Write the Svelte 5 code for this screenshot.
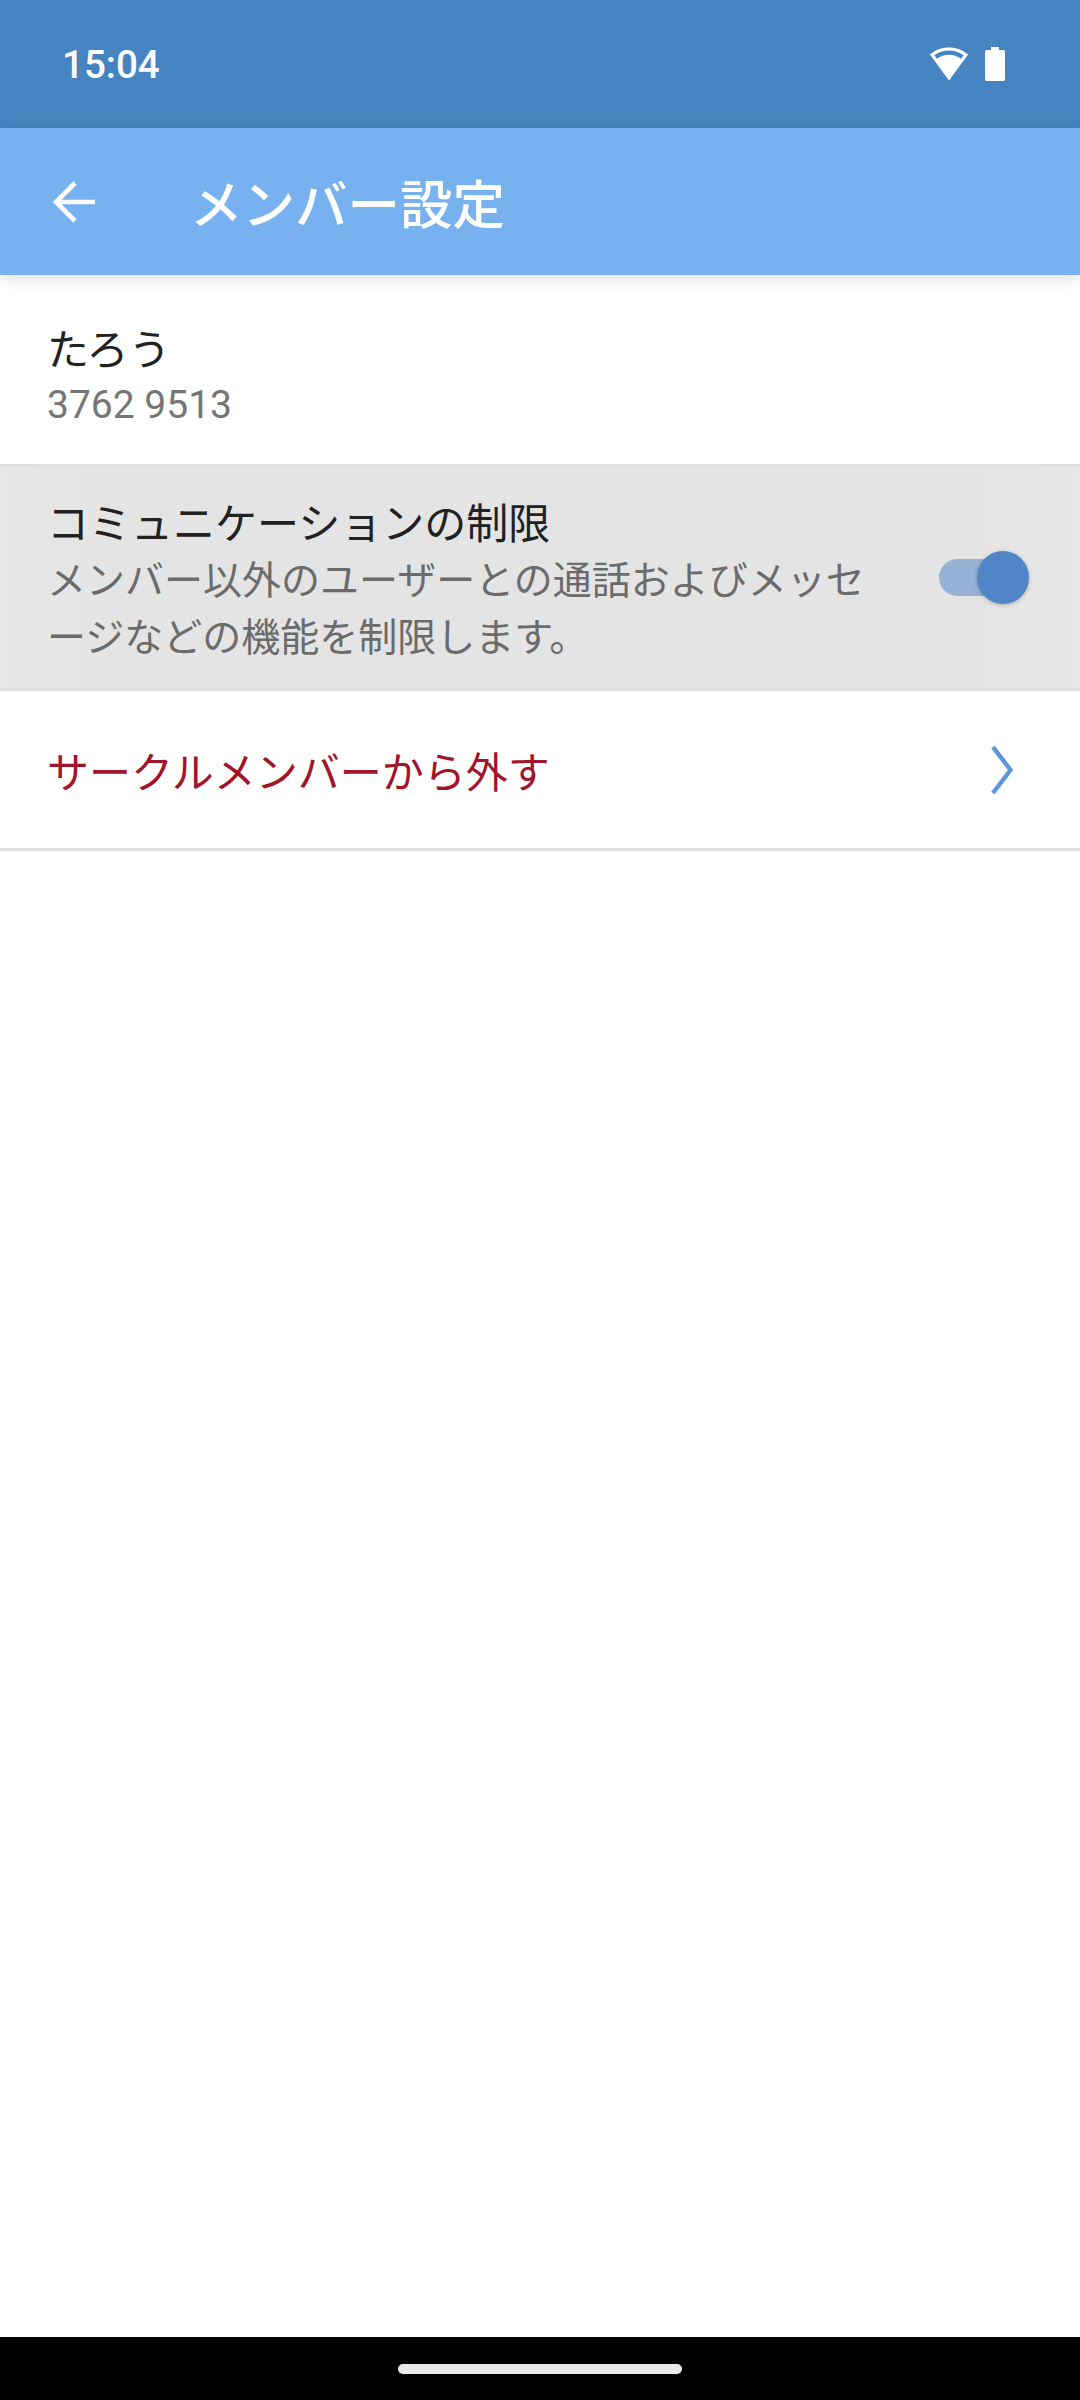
<script>
  const rows = { name: 'たろう', id: '3762 9513' };
</script>

<div class="screen">
  <header class="status">
    <span class="time">15:04</span>
    <div class="status-icons">
      <svg class="wifi" width="40" height="34" viewBox="0 0 42 34" preserveAspectRatio="none" aria-hidden="true">
        <path fill="#fff" d="M21 0.5C13.4 0.5 6.6 3 1 7.6L21 33.5 41 7.6C35.4 3 28.6 0.5 21 0.5ZM5.6 8.2C10.2 5 15.4 3.4 21 3.4S31.8 5 36.4 8.2L33.6 11.8C29.8 9.2 25.6 7.8 21 7.8S12.2 9.2 8.4 11.8Z" fill-rule="evenodd"/>
      </svg>
      <svg class="battery" width="20" height="34" viewBox="0 0 20 34" aria-hidden="true">
        <path fill="#fff" d="M6 0H14V3H18.2C19.2 3 20 3.8 20 4.8V32.2C20 33.2 19.2 34 18.2 34H1.8C.8 34 0 33.2 0 32.2V4.8C0 3.8.8 3 1.8 3H6Z"/>
      </svg>
    </div>
  </header>

  <div class="appbar">
    <svg class="back" width="42" height="42" viewBox="0 0 42 42" aria-hidden="true">
      <path fill="none" stroke="#fff" stroke-width="4.6" d="M43 21H3M22 2L3 21l19 19"/>
    </svg>
    <h1>メンバー設定</h1>
  </div>

  <main class="content">
    <section class="row info">
      <div class="primary">{rows.name}</div>
      <div class="secondary num">{rows.id}</div>
    </section>

    <section class="row restrict">
      <div class="restrict-text">
        <div class="primary">コミュニケーションの制限</div>
        <div class="secondary">メンバー以外のユーザーとの通話およびメッセージなどの機能を制限します。</div>
      </div>
      <div class="switch">
        <span class="track"></span>
        <span class="thumb"></span>
      </div>
    </section>

    <section class="row leave">
      <span class="danger">サークルメンバーから外す</span>
      <svg class="chevron" width="24" height="50" viewBox="0 0 24 50" aria-hidden="true">
        <path fill="none" stroke="#5b96dc" stroke-width="4.4" d="M3 2L20.5 25 3 48"/>
      </svg>
    </section>
  </main>

  <footer class="nav"><span class="pill"></span></footer>
</div>

<style>
  :global(body) {
    margin: 0;
    background: #fff;
  }

  .screen {
    width: 1080px;
    height: 2400px;
    display: flex;
    flex-direction: column;
    font-family: Roboto, "Noto Sans CJK JP", sans-serif;
    background: #fff;
    overflow: hidden;
  }

  .status {
    height: 128px;
    flex: none;
    box-sizing: border-box;
    padding: 0 75px 0 62px;
    background: #4584c1;
    display: flex;
    align-items: center;
    justify-content: space-between;
    color: #fff;
  }

  .time {
    font-size: 38.5px;
    font-weight: 500;
  }

  .status-icons {
    display: flex;
    align-items: center;
    gap: 16px;
  }

  .appbar {
    height: 147px;
    flex: none;
    box-sizing: border-box;
    padding-left: 53px;
    background: #78b1f0;
    display: flex;
    align-items: center;
    gap: 95px;
    box-shadow: 0 4px 14px rgba(0, 0, 0, 0.12);
    position: relative;
    z-index: 1;
  }

  h1 {
    margin: 0;
    color: #fff;
    font-size: 52.5px;
    font-weight: 500;
    line-height: 1;
    font-family: "Noto Sans CJK JP", sans-serif;
  }

  .content {
    flex: 1;
    display: flex;
    flex-direction: column;
  }

  .row {
    box-sizing: border-box;
    padding: 0 48px 0 47px;
    border-bottom: 3px solid #e0e0e0;
  }

  .primary {
    font-size: 42px;
    line-height: 57px;
    color: #212121;
    font-family: "Noto Sans CJK JP", sans-serif;
  }

  .secondary {
    font-size: 39px;
    line-height: 57px;
    color: #757575;
    font-family: "Noto Sans CJK JP", sans-serif;
  }

  .secondary.num {
    font-family: Roboto, sans-serif;
    line-height: 60px;
  }

  .info {
    height: 192px;
    padding-top: 43px;
  }

  .restrict {
    height: 224px;
    background: linear-gradient(90deg, #e8e8e8 0, #e4e4e4 10%, #e4e4e4 88%, #e8e8e8 100%);
    display: flex;
    align-items: center;
    justify-content: space-between;
    padding-right: 51px;
  }

  .restrict-text {
    width: 830px;
  }

  .restrict-text .secondary {
    color: #6b6b6b;
  }

  .switch {
    position: relative;
    width: 90px;
    height: 54px;
    flex: none;
  }

  .track {
    position: absolute;
    left: 0;
    top: 8px;
    width: 80px;
    height: 37px;
    border-radius: 19px;
    background: #96b2d6;
  }

  .thumb {
    position: absolute;
    right: 0;
    top: 0;
    width: 52px;
    height: 53px;
    border-radius: 50%;
    background: #5085c8;
    box-shadow: 0 1px 4px rgba(0, 0, 0, 0.25);
  }

  .leave {
    height: 160px;
    display: flex;
    align-items: center;
    justify-content: space-between;
    padding-right: 66px;
  }

  .danger {
    font-size: 42px;
    color: #a1142a;
    font-family: "Noto Sans CJK JP", sans-serif;
  }

  .nav {
    height: 63px;
    flex: none;
    background: #000;
    display: flex;
    justify-content: center;
    padding-top: 27px;
    box-sizing: border-box;
  }

  .pill {
    width: 284px;
    height: 10px;
    border-radius: 5px;
    background: #e9e9e9;
  }
</style>
